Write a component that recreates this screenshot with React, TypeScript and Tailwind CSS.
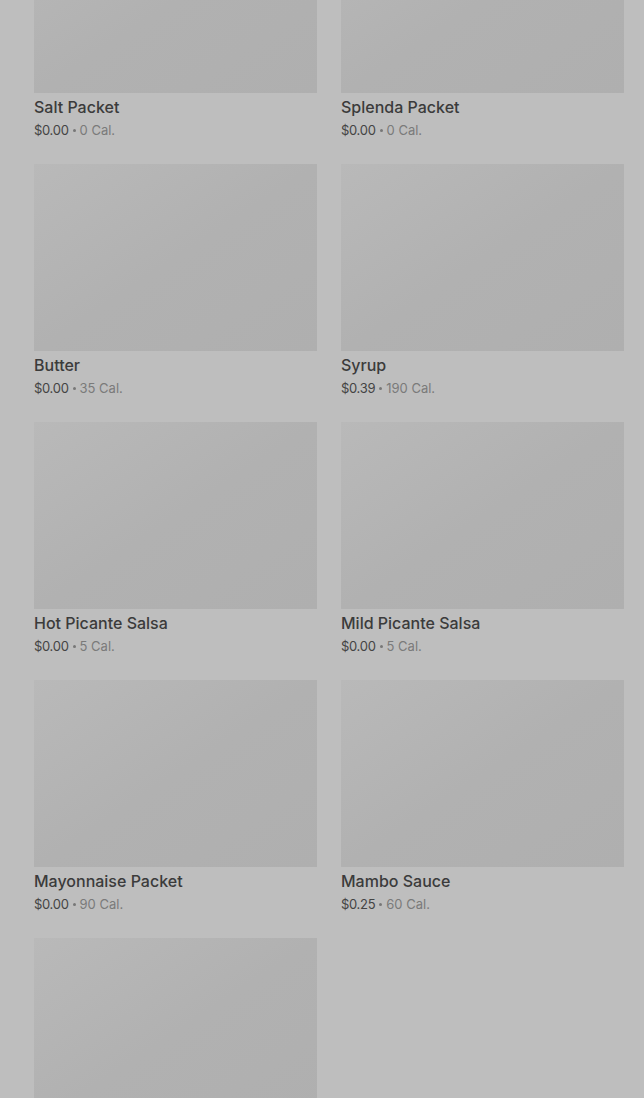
import React from 'react';

type Item = { name: string; price: string; cal: string };

const items: Item[] = [
  { name: 'Salt Packet', price: '$0.00', cal: '0 Cal.' },
  { name: 'Splenda Packet', price: '$0.00', cal: '0 Cal.' },
  { name: 'Butter', price: '$0.00', cal: '35 Cal.' },
  { name: 'Syrup', price: '$0.39', cal: '190 Cal.' },
  { name: 'Hot Picante Salsa', price: '$0.00', cal: '5 Cal.' },
  { name: 'Mild Picante Salsa', price: '$0.00', cal: '5 Cal.' },
  { name: 'Mayonnaise Packet', price: '$0.00', cal: '90 Cal.' },
  { name: 'Mambo Sauce', price: '$0.25', cal: '60 Cal.' },
  { name: '', price: '', cal: '' },
];

function ItemCard({ item }: { item: Item }) {
  return (
    <div className="flex flex-col">
      {/* placeholder image, shimmer look */}
      <div className="h-[187px] w-full bg-gradient-to-br from-[#b9b9b9] via-[#b1b1b1] to-[#afafaf]" />
      {item.name && (
        <div className="mt-[4px]">
          <div className="text-[16px] leading-5 font-medium text-[#3b3b3b]">{item.name}</div>
          <div className="mt-[3px] flex items-center text-[13px] leading-5 text-[#444]">
            <span className="tracking-[-0.3px]">{item.price}</span>
            <span className="mx-[4px] h-[3px] w-[3px] rounded-full bg-[#777]" />
            <span className="text-[#7a7a7a]">{item.cal}</span>
          </div>
        </div>
      )}
    </div>
  );
}

export default function App() {
  return (
    <div
      className="h-[1098px] overflow-hidden bg-[#bebebe]"
      style={{ fontFamily: 'Inter, "Noto Sans", sans-serif' }}
    >
      <div className="-mt-[94px] pl-[34px] pr-[20px] grid grid-cols-2 gap-x-6 gap-y-6">
        {items.map((it, i) => (
          <ItemCard key={i} item={it} />
        ))}
      </div>
    </div>
  );
}
